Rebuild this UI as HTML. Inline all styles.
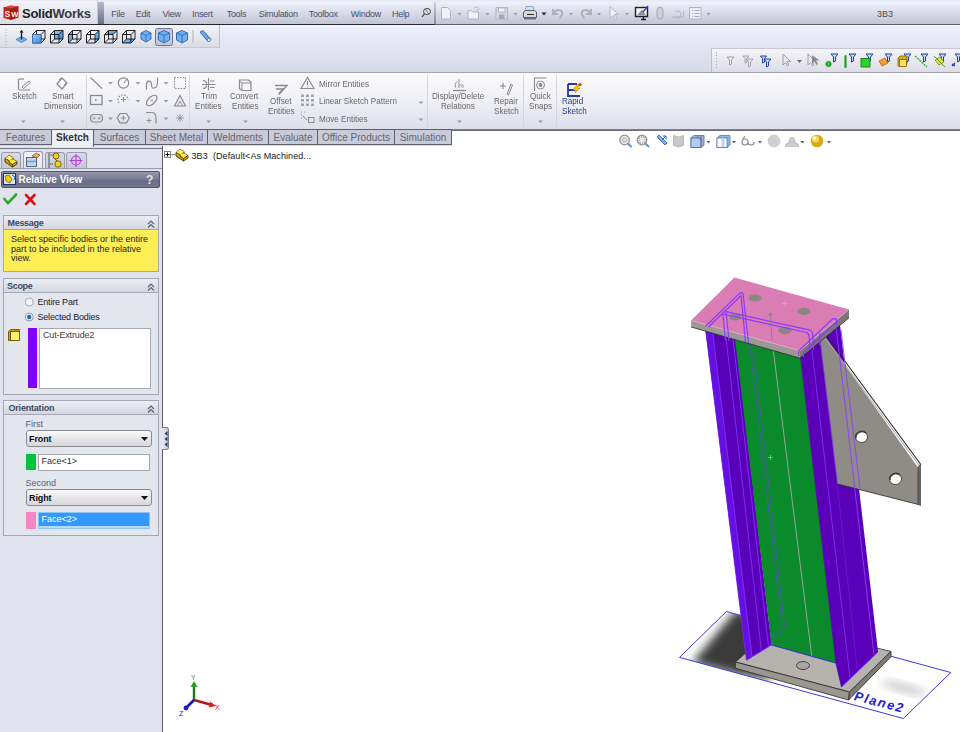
<!DOCTYPE html>
<html><head><meta charset="utf-8">
<style>
*{box-sizing:border-box}
html,body{margin:0;padding:0;width:960px;height:732px;overflow:hidden;background:#fff;font-family:"Liberation Sans",sans-serif;}
.a{position:absolute}
.t{position:absolute;white-space:nowrap;line-height:1}
#title{left:0;top:0;width:960px;height:25px;background:linear-gradient(#e6e8f0 0%,#eef0fa 10%,#dcdfea 45%,#c6c9d8 85%,#c2c5d4 100%)}
#band{left:0;top:25px;width:960px;height:48px;background:linear-gradient(#fafbff 0%,#eceef9 4%,#e4e6f2 40%,#d6d9e6 100%)}
#ribbon{left:0;top:73px;width:960px;height:57px;background:linear-gradient(#fafafc 0%,#eff0f5 50%,#dcdee8 100%)}
#panel{left:0;top:146px;width:163px;height:586px;background:#e0e3ed}
.menu{font-size:9px;color:#4c4c70;top:9.5px;letter-spacing:-0.3px}
.rt{font-size:9px;color:#686868;transform:scaleX(0.9);transform-origin:0 0}
.tab{position:absolute;top:129px;height:16px;background:#c9cbd8;border:1px solid #5d5e6c;border-left:none;font-size:10px;color:#656570;text-align:center;line-height:15.5px}
</style></head><body>
<!-- title / menu bar -->
<div id="title" class="a"></div>
<div class="a" style="left:0;top:24px;width:435px;height:1px;background:#22242c"></div>
<div class="a" style="left:435px;top:24px;width:525px;height:1px;background:#60626e"></div>
<!-- logo -->
<div class="a" style="left:98px;top:2px;width:6px;height:22px;background:linear-gradient(#b8b8cc,#6c6c88)"></div>
<div class="t menu" style="left:111.3px">File</div>
<div class="t menu" style="left:135.8px">Edit</div>
<div class="t menu" style="left:162.5px">View</div>
<div class="t menu" style="left:192px">Insert</div>
<div class="t menu" style="left:226.7px">Tools</div>
<div class="t menu" style="left:258.7px">Simulation</div>
<div class="t menu" style="left:308.7px">Toolbox</div>
<div class="t menu" style="left:350.8px">Window</div>
<div class="t menu" style="left:392px">Help</div>
<div class="t" style="left:877px;top:9.5px;font-size:9px;color:#4a4a58">3B3</div>

<!-- toolbar band -->
<div id="band" class="a"></div>
<div class="a" style="left:0;top:72px;width:960px;height:1px;background:#a4a4ae"></div>
<div class="a" style="left:0;top:25px;width:220px;height:23px;background:linear-gradient(#f4f4f8,#dcdce6);border-right:1px solid #c0c0cc;border-bottom:1px solid #c8c8d2"></div>
<div class="a" style="left:711px;top:48px;width:249px;height:24px;background:linear-gradient(#f4f4f8,#dcdce6);border-left:1px solid #c0c0cc;border-top:1px solid #c8c8d2"></div>

<!-- title toolbar icons -->
<div class="a" style="left:0;top:1px;width:98px;height:23px;background:linear-gradient(#f2f2f7,#dcdce6);border-right:1px solid #c8c8d4"></div>
<div class="a" style="left:434px;top:2px;width:2px;height:22px;background:linear-gradient(#d0d0dc,#8a8a9a)"></div>
<svg class="a" style="left:0;top:0" width="960" height="25" viewBox="0 0 960 25">
<!-- logo cube -->
<path d="M3.5 7.5L10.5 5.3 18.5 6.5 11 8.7z" fill="#e8483c"/>
<path d="M3.5 7.5L11 8.7 11 20 3.5 18z" fill="#c8221a"/>
<path d="M11 8.7L18.5 6.5 18.5 17.5 11 20z" fill="#b01810"/>
<path d="M3.5 7.5L11 8.7 18.5 6.5M11 8.7V20" fill="none" stroke="#801008" stroke-width="0.6"/>
<text x="4.6" y="17.2" font-family="Liberation Sans" font-weight="bold" font-size="8.5" fill="#ffe8e4">S</text>
<text x="11.3" y="16.8" font-family="Liberation Sans" font-weight="bold" font-size="7.5" fill="#fff4f0">W</text>
<!-- pin -->
<path d="M422 17l3-4" stroke="#404040" stroke-width="1.2"/><ellipse cx="427" cy="11.5" rx="3.5" ry="3" fill="#e8e8ec" stroke="#404040" stroke-width="1"/><path d="M425 9l4 5" stroke="#606060" stroke-width="0.8"/>
<g fill="#f2f2f6" stroke="#b4b4bc" stroke-width="1">
<!-- new -->
<path d="M441.5 7.5h6l3 3v8.5h-9z"/>
<!-- open -->
<path d="M468 10.5h3l1.5 1.5h6v7h-10.5z"/><path d="M474 8l3-1.5 2 2-2 2" fill="none"/>
<!-- save -->
<path d="M496 7.5h11.5v11.5h-11.5z" fill="#d8d8dc"/>
<rect x="498.5" y="8" width="6.5" height="4" fill="#f4f4f6"/><rect x="499" y="14.5" width="5.5" height="4.5" fill="#a8a8b0" stroke="none"/>
<!-- undo -->
<path d="M553 9v5h5M553.5 13.5q3-5 7-3t-1 8" fill="none" stroke="#b0b0b8" stroke-width="2"/>
<!-- redo -->
<path d="M591 9v5h-5M590.5 13.5q-3-5-7-3t1 8" fill="none" stroke="#b0b0b8" stroke-width="2"/>
<!-- select -->
<path d="M610 6.5v12l3-3 2.5 4 1.5-1-2.5-4h4z"/>
<!-- paperclip -->
<rect x="657" y="7" width="6" height="12" rx="3" fill="#d0d0d4" stroke="#a8a8b0"/>
<!-- tape -->
<path d="M672 17h4M675 12a3.5 3.5 0 1 1 0.1 5h8.5v-6.5" fill="none"/>
<!-- options -->
<rect x="689.5" y="7.5" width="11.5" height="11.5" fill="#eeeef2"/>
<path d="M692 10.5h1M694.5 10.5h5M692 13.5h1M694.5 13.5h5M692 16.5h1M694.5 16.5h5" stroke="#a8a8b0"/>
</g>
<!-- print -->
<path d="M526 6.5h7l1 5h-9z" fill="#c8e0fa" stroke="#7a9ac8" stroke-width="0.8"/>
<path d="M523.5 12l2-1.5h9l2 1.5v5.5h-13z" fill="#d8d8da" stroke="#505050" stroke-width="0.9"/>
<path d="M524 17.5h12v2h-12z" fill="#707070"/>
<path d="M527 14.5h7" stroke="#303030" stroke-width="1"/>
<!-- rebuild monitor -->
<rect x="635.5" y="7.5" width="12" height="9" fill="#f0f0f4" stroke="#202020" stroke-width="1.4"/>
<path d="M637 15.5l5-6 4 6z" fill="#909098"/><path d="M641 19.5h5M643.5 16.5v3" stroke="#202020" stroke-width="1.3"/>
<path d="M643 12l5-6" stroke="#3040c0" stroke-width="1.3"/>
<!-- arrows -->
<g fill="#9a9aa4">
<path d="M457.5 13h4l-2 2.5z"/><path d="M485.5 13h4l-2 2.5z"/><path d="M513.5 13h4l-2 2.5z"/><path d="M569 13h4l-2 2.5z"/><path d="M597 13h4l-2 2.5z"/><path d="M625 13h4l-2 2.5z"/><path d="M706.5 13h4l-2 2.5z"/>
</g>
<path d="M541.5 12.5h5l-2.5 3z" fill="#202040"/>
</svg>
<div class="t" style="left:22px;top:7px;font-size:13px;font-weight:bold;color:#222226;letter-spacing:-0.25px">Solid<span style="color:#3a3a44">Works</span></div>
<!-- view toolbar icons -->
<svg class="a" style="left:0;top:25px" width="220" height="23" viewBox="0 25 220 23">
<g fill="#a8a8b4"><rect x="5.5" y="29" width="1" height="1"/><rect x="5.5" y="32" width="1" height="1"/><rect x="5.5" y="35" width="1" height="1"/><rect x="5.5" y="38" width="1" height="1"/><rect x="5.5" y="41" width="1" height="1"/><rect x="5.5" y="44" width="1" height="1"/></g>
<!-- normal to -->
<path d="M16 39.5l5.5-3 5.5 3-5.5 3z" fill="#7ab4ec" stroke="#3a78c0" stroke-width="0.8"/>
<path d="M21.5 39.5v-9" stroke="#101020" stroke-width="1.2"/><path d="M19.5 32.5l2-2.5 2 2.5z" fill="#101020"/>
<!-- cubes -->
<defs><linearGradient id="cubeblue" x1="0" y1="0" x2="1" y2="1"><stop offset="0" stop-color="#9ccaf4"/><stop offset="1" stop-color="#3a88d8"/></linearGradient></defs>
<path d="M32.5 34.5 L41.0 34.5 L41.0 43.0 L32.5 43.0zM36.5 30.5 L45.0 30.5 L45.0 39.0 L36.5 39.0zM32.5 34.5L36.5 30.5M41.0 34.5L45.0 30.5M41.0 43.0L45.0 39.0M32.5 43.0L36.5 39.0" fill="none" stroke="#101010" stroke-width="0.9"/><path d="M32.5 34.5 L41.0 34.5 L41.0 43.0 L32.5 43.0z" fill="url(#cubeblue)" stroke="#3a70b8" stroke-width="0.8"/>
<path d="M54.5 30.5 L63.0 30.5 L63.0 39.0 L54.5 39.0z" fill="url(#cubeblue)"/><path d="M50.5 34.5 L59.0 34.5 L59.0 43.0 L50.5 43.0zM54.5 30.5 L63.0 30.5 L63.0 39.0 L54.5 39.0zM50.5 34.5L54.5 30.5M59.0 34.5L63.0 30.5M59.0 43.0L63.0 39.0M50.5 43.0L54.5 39.0" fill="none" stroke="#101010" stroke-width="0.9"/>
<path d="M68.5 34.5 L72.5 30.5 L72.5 39.0 L68.5 43.0z" fill="url(#cubeblue)"/><path d="M68.5 34.5 L77.0 34.5 L77.0 43.0 L68.5 43.0zM72.5 30.5 L81.0 30.5 L81.0 39.0 L72.5 39.0zM68.5 34.5L72.5 30.5M77.0 34.5L81.0 30.5M77.0 43.0L81.0 39.0M68.5 43.0L72.5 39.0" fill="none" stroke="#101010" stroke-width="0.9"/>
<path d="M95.0 34.5 L99.0 30.5 L99.0 39.0 L95.0 43.0z" fill="url(#cubeblue)"/><path d="M86.5 34.5 L95.0 34.5 L95.0 43.0 L86.5 43.0zM90.5 30.5 L99.0 30.5 L99.0 39.0 L90.5 39.0zM86.5 34.5L90.5 30.5M95.0 34.5L99.0 30.5M95.0 43.0L99.0 39.0M86.5 43.0L90.5 39.0" fill="none" stroke="#101010" stroke-width="0.9"/>
<path d="M104.5 34.5 L108.5 30.5 L117.0 30.5 L113.0 34.5z" fill="url(#cubeblue)"/><path d="M104.5 34.5 L113.0 34.5 L113.0 43.0 L104.5 43.0zM108.5 30.5 L117.0 30.5 L117.0 39.0 L108.5 39.0zM104.5 34.5L108.5 30.5M113.0 34.5L117.0 30.5M113.0 43.0L117.0 39.0M104.5 43.0L108.5 39.0" fill="none" stroke="#101010" stroke-width="0.9"/>
<path d="M122.5 43.0 L126.5 39.0 L135.0 39.0 L131.0 43.0z" fill="url(#cubeblue)"/><path d="M122.5 34.5 L131.0 34.5 L131.0 43.0 L122.5 43.0zM126.5 30.5 L135.0 30.5 L135.0 39.0 L126.5 39.0zM122.5 34.5L126.5 30.5M131.0 34.5L135.0 30.5M131.0 43.0L135.0 39.0M122.5 43.0L126.5 39.0" fill="none" stroke="#101010" stroke-width="0.9"/>
<!-- iso cubes -->
<path d="M146 30.5l5 2.5v6l-5 3-5-3v-6z" fill="#6eb0f0" stroke="#2a62b0" stroke-width="0.9"/><path d="M141 33l5 2.5 5-2.5M146 35.5v6" fill="none" stroke="#2a62b0" stroke-width="0.8"/>
<rect x="155.5" y="28.5" width="17" height="17" rx="2" fill="#c4c8dc" stroke="#70748c" stroke-width="1"/>
<path d="M164 30.5l5.5 2.5v7l-5.5 3-5.5-3v-7z" fill="#6eb0f0" stroke="#2a62b0" stroke-width="0.9"/><path d="M158.5 33l5.5 2.5 5.5-2.5M164 35.5v7" fill="none" stroke="#2a62b0" stroke-width="0.8"/>
<path d="M182 30.5l5.5 2.5v7l-5.5 3-5.5-3v-7z" fill="#6eb0f0" stroke="#2a62b0" stroke-width="0.9"/><path d="M176.5 33l5.5 2.5 5.5-2.5M182 35.5v7" fill="none" stroke="#2a62b0" stroke-width="0.8"/>
<rect x="192.5" y="30" width="1" height="13" fill="#b0b0bc"/>
<!-- wand -->
<path d="M200 32l3-1.5 8 9-2.5 2.5z" fill="#6aa8e8" stroke="#2a62b0" stroke-width="0.9"/><circle cx="209" cy="40" r="1.6" fill="#fff" stroke="#2a62b0" stroke-width="0.6"/>
</svg>
<!-- selection filter toolbar icons -->
<svg class="a" style="left:711px;top:48px" width="249" height="24" viewBox="711 48 249 24">
<g fill="#a8a8b4"><rect x="716" y="52" width="1" height="1"/><rect x="716" y="55" width="1" height="1"/><rect x="716" y="58" width="1" height="1"/><rect x="716" y="61" width="1" height="1"/><rect x="716" y="64" width="1" height="1"/><rect x="716" y="67" width="1" height="1"/></g>
<g fill="#e8e8ee" stroke="#9a9aa4" stroke-width="0.9">
<path d="M727 57h7l-2.5 3v4l-2 1v-5z"/>
<path d="M743 56h6l-2 2.5v3.5l-2 1v-4.5zM746 59h7l-2.5 3v4l-2 1v-5z"/>
<path d="M783 54v11l2.5-2.5 2 3.5 1.5-1-2-3.5h3.5z"/>
<path d="M808 54v11l2.5-2.5 2 3.5 1.5-1-2-3.5h3.5z"/>
</g>
<path d="M812 55v9l2.5-2.5 2 3.5 1.5-1-2-3.5h3.5z" fill="#8a8a94"/>
<path d="M797 60h5l-2.5 3z" fill="#6a6a74"/>
<g fill="#c8dcf8" stroke="#2040a0" stroke-width="1">
<path d="M760.5 56h6l-2 2.5v3.5l-2 1v-4.5zM764 59h7l-2.5 3v4l-2 1v-5z"/>
<path d="M831 54h7l-2.5 3v4l-2 1v-5z"/>
<path d="M849 54h7l-2.5 3v4l-2 1v-5z"/>
<path d="M866 54h7l-2.5 3v4l-2 1v-5z"/>
<path d="M885 54h7l-2.5 3v4l-2 1v-5z"/>
<path d="M904 54h7l-2.5 3v4l-2 1v-5z"/>
<path d="M921 54h7l-2.5 3v4l-2 1v-5z"/>
<path d="M939 54h7l-2.5 3v4l-2 1v-5z"/>
<path d="M955 54h7l-2.5 3v4l-2 1v-5z"/>
</g>
<circle cx="828.5" cy="64" r="2.6" fill="#30c030" stroke="#108010" stroke-width="0.8"/>
<path d="M845.5 56v11" stroke="#20a020" stroke-width="2.2" stroke-linecap="round"/>
<rect x="861" y="58.5" width="9" height="8.5" fill="#30d030" stroke="#108010" stroke-width="0.9"/>
<path d="M879 61l6-3 3 5-6 3z" fill="#f4a030" stroke="#c06010" stroke-width="0.8"/>
<path d="M898 58l2-2h7v8l-2 2h-7z" fill="#d4b020" stroke="#806000" stroke-width="0.8"/><rect x="899.5" y="59.5" width="7" height="7" fill="#f8e060" stroke="#806000" stroke-width="0.8"/>
<path d="M915 56l12 11" stroke="#30a030" stroke-width="1.3" stroke-dasharray="2 1"/>
<path d="M935 60l5-3 4 5-5 3z" fill="#f0e040" stroke="#908010" stroke-width="0.8"/><path d="M934 56l11 11" stroke="#30a030" stroke-width="1"/>
<path d="M952 64l3 2M955 63l-3 3" stroke="#2040c0" stroke-width="1.5"/>
</svg>
<!-- ribbon -->
<div id="ribbon" class="a"></div>
<svg class="a" style="left:0;top:72px" width="600" height="58" viewBox="0 72 600 58">
<g fill="none" stroke="#8a8a8a" stroke-width="1.2">
<!-- sketch icon -->
<path d="M18.5 79v9.5q0 1.5 1.5 1.5h10"/><path d="M19 79h5" /><path d="M22 87l7-6 1.5 1.5-7 6z" stroke-width="1"/>
<!-- smart dimension -->
<path d="M57 84l5-6 5 5-5 6z"/><path d="M59 80l2-2M64 85l2-2" stroke-width="1"/>
<!-- line -->
<path d="M90.5 77.5l11.5 11"/>
<!-- circle -->
<circle cx="123.5" cy="83" r="5.2"/><path d="M124 83l3.5-4.5" stroke-width="1"/>
<!-- spline -->
<path d="M146.5 89.5V85C146.5 80 151.5 80 151.5 84.5S153 88.5 155.5 87.5 157.5 82 157.5 77.5"/>
<!-- rectangle -->
<rect x="90.5" y="95.5" width="11.5" height="9" stroke-width="1.3"/><rect x="95" y="99" width="1.6" height="1.6" fill="#8a8a8a" stroke="none"/>
<!-- arc dashed -->
<path d="M119 103a5 5 0 1 1 9 -3" stroke-dasharray="1.5 1.5"/><path d="M123.5 97v5M121 99.5h5" stroke-width="1"/>
<!-- ellipse -->
<ellipse cx="151.7" cy="100.5" rx="6.5" ry="3.5" transform="rotate(-45 151.7 100.5)"/><path d="M150.5 99.3l2.4 2.4M152.9 99.3l-2.4 2.4" stroke-width="0.7"/>
<!-- slot -->
<rect x="90.5" y="114.5" width="12" height="7.5" rx="3.5"/><circle cx="94" cy="118.2" r="1" stroke-width="0.8"/><circle cx="99" cy="118.2" r="1" stroke-width="0.8"/>
<!-- polygon -->
<path d="M120 113.5h6.5l2.8 4.5-2.8 4.8h-6.5l-2.8-4.8z"/><path d="M123.3 115.5v5M120.8 118h5" stroke-width="1"/>
<!-- fillet -->
<path d="M146 112.5h5q5 0 5 5v6"/><path d="M149 118v5M146.5 120.5h5" stroke-width="0.9"/>
<!-- dashed box -->
<path d="M174.5 77.5h11v11h-11z" stroke-dasharray="1.5 1.3" stroke-width="1"/>
<!-- text A -->
<path d="M174.5 106l5.5-10.5 5.5 10.5z"/><path d="M177.5 106l2.5-5 2.5 5" stroke-width="0.9"/>
<!-- point star -->
<path d="M180 114v8M176 118h8M177.2 115.2l5.6 5.6M182.8 115.2l-5.6 5.6" stroke-width="0.8"/>
<!-- trim -->
<path d="M208.5 78v12.5M202 84.5h13.5M210 81h4.5M210 87.5h4.5M203 80.5q3 0 4 3M203 88.5q3 0 4-3" stroke-width="1.1"/>
<!-- convert -->
<path d="M239.5 81v7.5l2.5 2h9v-8l-2.5-2.5h-9z"/><path d="M242 91v-8h9M239.5 81l2.5 2" stroke-width="1"/>
<!-- offset -->
<path d="M275 85.5h12l-8 9" stroke-width="1.3"/><path d="M276 89h7l-4.5 5" stroke-width="1.3"/>
<!-- mirror -->
<path d="M307.5 77.5l-6.5 11h13z" stroke-width="1.2"/><path d="M307.5 81v4M307.5 86.5v1" stroke-width="1.2"/>
<!-- repair -->
<path d="M500 86h6M503 83v6" stroke-width="1.1"/><path d="M507 94l4-10 1.5 1-4 10z" stroke-width="1"/>
<!-- quick snaps -->
<path d="M534.5 91v-13h12" stroke-width="1.1"/><circle cx="540.5" cy="85" r="4" stroke-width="1"/><circle cx="540.5" cy="85" r="1.3" fill="#8a8a8a"/>
<!-- display/delete relations -->
<path d="M453 90.5h13" stroke-width="1.3"/><path d="M455.5 87.5q-1.5-4 1.5-6M459 88v-9M459.5 84l3 3.5M462 84l2 3" stroke-width="0.9"/>
</g>
<!-- linear pattern dots -->
<g fill="#a4a4a4">
<rect x="301" y="94.5" width="3" height="2.5"/><rect x="306" y="94.5" width="3" height="2.5"/><rect x="311" y="94.5" width="3" height="2.5"/>
<rect x="301" y="99" width="3" height="2.5"/><rect x="306" y="99" width="3" height="2.5"/><rect x="311" y="99" width="3" height="2.5"/>
<rect x="301" y="103.5" width="3" height="2.5"/><rect x="306" y="103.5" width="3" height="2.5"/><rect x="311" y="103.5" width="3" height="2.5"/>
</g>
<g fill="none" stroke="#8c8c8c" stroke-width="1">
<path d="M301 112h1M304 112h1M301 115h1M301 118h1M304 115v0" stroke-dasharray="1 1.5"/>
<path d="M303 116l4 4" /><rect x="308.5" y="117.5" width="5.5" height="5"/>
</g>
<!-- dropdown arrows -->
<g fill="#9a9aa2">
<path d="M21 120.5h5l-2.5 2.5z"/><path d="M60 120.5h5l-2.5 2.5z"/>
<path d="M108 82h5l-2.5 2.5z"/><path d="M135.5 82h5l-2.5 2.5z"/><path d="M163.5 82h5l-2.5 2.5z"/>
<path d="M108 100h5l-2.5 2.5z"/><path d="M135.5 100h5l-2.5 2.5z"/><path d="M163.5 100h5l-2.5 2.5z"/>
<path d="M108 117.5h5l-2.5 2.5z"/><path d="M163.5 117.5h5l-2.5 2.5z"/>
<path d="M206 120.5h5l-2.5 2.5z"/><path d="M243 120.5h5l-2.5 2.5z"/>
<path d="M418.5 101.5h5l-2.5 2.5z"/><path d="M418.5 118.5h5l-2.5 2.5z"/>
<path d="M457 120.5h5l-2.5 2.5z"/><path d="M538 120.5h5l-2.5 2.5z"/>
</g>
<!-- separators -->
<g fill="#d4d5de">
<rect x="86" y="75" width="1" height="52"/><rect x="189" y="75" width="1" height="52"/><rect x="427" y="75" width="1" height="52"/><rect x="523" y="75" width="1" height="52"/><rect x="556" y="75" width="1" height="52"/>
</g>
<!-- rapid sketch icon -->
<path d="M568 84h9M568 84v12h12M568 90h7" fill="none" stroke="#2a3a9a" stroke-width="1.8"/>
<path d="M574 88l4-4 2 1-3 3h3l-5 5 1-3h-3z" fill="#f5c400" stroke="#b08000" stroke-width="0.5"/>
<circle cx="580" cy="84.5" r="1.6" fill="#e03020"/>
</svg>

<div class="t rt" style="left:11.5px;top:92.0px">Sketch</div>
<div class="t rt" style="left:52px;top:92.0px">Smart</div>
<div class="t rt" style="left:43.75px;top:102.0px">Dimension</div>
<div class="t rt" style="left:201px;top:92.0px">Trim</div>
<div class="t rt" style="left:195px;top:102.0px">Entities</div>
<div class="t rt" style="left:230px;top:92.0px">Convert</div>
<div class="t rt" style="left:231.5px;top:102.0px">Entities</div>
<div class="t rt" style="left:270px;top:97.0px">Offset</div>
<div class="t rt" style="left:268px;top:107.0px">Entities</div>
<div class="t rt" style="left:318.8px;top:79.7px">Mirror Entities</div>
<div class="t rt" style="left:318.75px;top:97.2px">Linear Sketch Pattern</div>
<div class="t rt" style="left:318.8px;top:114.8px">Move Entities</div>
<div class="t rt" style="left:432.4px;top:92.0px">Display/Delete</div>
<div class="t rt" style="left:441px;top:102.0px">Relations</div>
<div class="t rt" style="left:494px;top:97.0px">Repair</div>
<div class="t rt" style="left:494px;top:107.0px">Sketch</div>
<div class="t rt" style="left:530px;top:92.0px">Quick</div>
<div class="t rt" style="left:529px;top:102.0px">Snaps</div>
<div class="t rt" style="left:562px;top:97.0px;color:#2c3c8c">Rapid</div>
<div class="t rt" style="left:562px;top:107.0px;color:#2c3c8c">Sketch</div>
<!-- panel -->
<div id="panel" class="a"></div>
<div class="a" style="left:162px;top:146px;width:1px;height:586px;background:#555866"></div>
<div class="a" style="left:0;top:148px;width:162px;height:1px;background:#767886"></div>

<!-- panel contents -->
<!-- icon tabs -->
<div class="a" style="left:1px;top:152px;width:20px;height:17px;background:linear-gradient(#d8dae6,#c4c6d4);border:1px solid #9a9cac;border-bottom:none;border-radius:3px 3px 0 0"></div>
<div class="a" style="left:23px;top:151px;width:20px;height:18px;background:linear-gradient(#f4f5f8,#e4e5ec);border:1px solid #9a9cac;border-bottom:none;border-radius:3px 3px 0 0"></div>
<div class="a" style="left:45px;top:152px;width:20px;height:17px;background:linear-gradient(#d8dae6,#c4c6d4);border:1px solid #9a9cac;border-bottom:none;border-radius:3px 3px 0 0"></div>
<div class="a" style="left:66px;top:152px;width:21px;height:17px;background:linear-gradient(#d8dae6,#c4c6d4);border:1px solid #9a9cac;border-bottom:none;border-radius:3px 3px 0 0"></div>
<div class="a" style="left:0;top:168px;width:162px;height:1px;background:#9a9cac"></div>
<svg class="a" style="left:0;top:150px" width="100" height="22" viewBox="0 150 100 22">
<!-- feature manager icon (yellow part) -->
<g transform="translate(4 153)">
<path d="M1 5.5L5 2.5 9 4.5 9 6.5 13 8.5 13 11 8.5 14 1 9z" fill="#d8a800" stroke="#3a2c00" stroke-width="0.9"/>
<path d="M1 5.5L5 2.5 9 4.5 5 7.5z" fill="#fff27a"/>
<path d="M5 7.5L9 6.5 13 8.5 8.5 11.5z" fill="#ffe840"/>
<path d="M1 5.5L5 7.5 5 9.5 8.5 11.5 8.5 14M8.5 11.5L13 8.5" fill="none" stroke="#3a2c00" stroke-width="0.8"/>
</g>
<!-- property manager -->
<rect x="26.5" y="157.5" width="10" height="9" fill="#bcd8f0" stroke="#4a5a70" stroke-width="0.9"/>
<path d="M27 161.5h9" stroke="#6aa0d0" stroke-width="1.5"/>
<path d="M32 156l4-3 4 2-3 3z" fill="#e8b060" stroke="#7a5020" stroke-width="0.7"/>
<!-- config manager -->
<path d="M49 153v15" stroke="#505060" stroke-width="1"/><path d="M50 155h3M50 164h3" stroke="#505060" stroke-width="0.8"/>
<circle cx="56" cy="156" r="3" fill="#f0d020" stroke="#5a4800" stroke-width="0.8"/>
<circle cx="58" cy="164" r="3.2" fill="#f0d020" stroke="#5a4800" stroke-width="0.8"/>
<path d="M55 159l2 2" stroke="#5a4800" stroke-width="0.8"/>
<!-- dimxpert -->
<circle cx="76" cy="160.5" r="4.5" fill="none" stroke="#b040e0" stroke-width="1.2"/>
<path d="M76 154v13M69.5 160.5h13" stroke="#b040e0" stroke-width="1.2"/>
</svg>
<!-- property manager header -->
<div class="a" style="left:1px;top:171px;width:159px;height:17px;background:linear-gradient(#9597ae 0%,#7a7c96 45%,#6a6c86 60%,#75778f 100%);border:1px solid #55576c;border-radius:2px"></div>
<svg class="a" style="left:2px;top:172px" width="16" height="15" viewBox="0 0 16 15">
<rect x="1.5" y="1.5" width="12" height="11" fill="#d8e4f4" stroke="#203060" stroke-width="1"/>
<path d="M3 4l4-1 3 4-2 4-4-2z" fill="#f0d000" stroke="#604800" stroke-width="0.6"/>
<path d="M10 3l3 2-1 3" fill="none" stroke="#3070d0" stroke-width="1"/>
</svg>
<div class="t" style="left:18.5px;top:175px;font-size:10px;font-weight:bold;color:#fff">Relative View</div>
<div class="t" style="left:146px;top:173.5px;font-size:12px;font-weight:bold;color:#e4e4ec">?</div>
<!-- check / x -->
<svg class="a" style="left:0;top:190px" width="40" height="18" viewBox="0 190 40 18">
<path d="M4.5 199l3.5 4 8-8.5" fill="none" stroke="#2a9a2a" stroke-width="2.6" stroke-linecap="round"/>
<path d="M5.5 199l2.5 2.5 7-7.5" fill="none" stroke="#6ad86a" stroke-width="1"/>
<path d="M26 195l8.5 9M34.5 195l-8.5 9" fill="none" stroke="#d01818" stroke-width="2.6" stroke-linecap="round"/>
</svg>
<!-- Message group -->
<div class="a" style="left:3px;top:215px;width:156px;height:57px;border:1px solid #a4a6b4;background:#fdee55"></div>
<div class="a" style="left:4px;top:216px;width:154px;height:14px;background:linear-gradient(#eceef4,#d4d6e0);border-bottom:1px solid #a4a6b4"></div>
<div class="t" style="left:7.5px;top:219px;font-size:9px;font-weight:bold;color:#3e4862;letter-spacing:-0.3px">Message</div>
<svg class="a" style="left:146px;top:219px" width="10" height="10" viewBox="0 0 10 10"><path d="M2 5l3-3 3 3M2 8.5l3-3 3 3" fill="none" stroke="#5a6070" stroke-width="1.15"/></svg>
<div class="t" style="left:11px;top:235px;font-size:9px;color:#1e1e1e;line-height:9.5px">Select specific bodies or the entire<br>part to be included in the relative<br>view.</div>
<!-- Scope group -->
<div class="a" style="left:3px;top:278px;width:156px;height:117px;border:1px solid #a4a6b4;background:#e4e6ee"></div>
<div class="a" style="left:4px;top:279px;width:154px;height:14px;background:linear-gradient(#eceef4,#d4d6e0);border-bottom:1px solid #a4a6b4"></div>
<div class="t" style="left:7px;top:282px;font-size:9px;font-weight:bold;color:#3e4862;letter-spacing:-0.3px">Scope</div>
<svg class="a" style="left:146px;top:282px" width="10" height="10" viewBox="0 0 10 10"><path d="M2 5l3-3 3 3M2 8.5l3-3 3 3" fill="none" stroke="#5a6070" stroke-width="1.15"/></svg>
<svg class="a" style="left:24px;top:296px" width="12" height="28" viewBox="0 0 12 28">
<circle cx="5.2" cy="6" r="4" fill="#f4f4f6" stroke="#a0a0a8" stroke-width="0.9"/>
<circle cx="5.2" cy="21" r="4" fill="#f4f4f6" stroke="#8090a8" stroke-width="0.9"/>
<circle cx="5.2" cy="21" r="2.2" fill="#1f6cb0"/>
</svg>
<div class="t" style="left:37.5px;top:297.5px;font-size:9px;color:#202030;letter-spacing:-0.2px">Entire Part</div>
<div class="t" style="left:37.5px;top:312.5px;font-size:9px;color:#202030;letter-spacing:-0.2px">Selected Bodies</div>
<svg class="a" style="left:6px;top:327px" width="16" height="16" viewBox="0 0 16 16">
<path d="M2.5 4.5l2-2h9v9l-2 2h-9z" fill="#c8a000" stroke="#6a5200" stroke-width="0.9"/>
<rect x="4.5" y="4.5" width="9" height="9" fill="#fff270" stroke="#6a5200" stroke-width="0.9"/>
</svg>
<div class="a" style="left:27.5px;top:328px;width:9.5px;height:60px;background:#7f00ff"></div>
<div class="a" style="left:39px;top:328px;width:112px;height:61px;background:#fff;border:1px solid #a8a8b0"></div>
<div class="t" style="left:43px;top:331px;font-size:9px;color:#404048;letter-spacing:-0.15px">Cut-Extrude2</div>
<!-- Orientation group -->
<div class="a" style="left:3px;top:400px;width:156px;height:136px;border:1px solid #a4a6b4;background:#e4e6ee"></div>
<div class="a" style="left:4px;top:401px;width:154px;height:14px;background:linear-gradient(#eceef4,#d4d6e0);border-bottom:1px solid #a4a6b4"></div>
<div class="t" style="left:8.5px;top:404px;font-size:9px;font-weight:bold;color:#3e4862;letter-spacing:-0.2px">Orientation</div>
<svg class="a" style="left:146px;top:404px" width="10" height="10" viewBox="0 0 10 10"><path d="M2 5l3-3 3 3M2 8.5l3-3 3 3" fill="none" stroke="#5a6070" stroke-width="1.15"/></svg>
<div class="t" style="left:25.5px;top:419.5px;font-size:9px;color:#5a5c72">First</div>
<div class="a" style="left:25.5px;top:430px;width:126px;height:16.5px;background:linear-gradient(#fafafa,#e6e6ea 50%,#d6d6dc);border:1px solid #8a8a92;border-radius:3px"></div>
<div class="t" style="left:29px;top:434.5px;font-size:9px;color:#101010;font-weight:bold;letter-spacing:-0.1px">Front</div>
<svg class="a" style="left:140px;top:436px" width="9" height="6" viewBox="0 0 9 6"><path d="M1 1h7l-3.5 4z" fill="#101010"/></svg>
<div class="a" style="left:25.5px;top:453.5px;width:10.5px;height:16.5px;background:#00c43c"></div>
<div class="a" style="left:37.5px;top:453.5px;width:112.5px;height:17px;background:#fff;border:1px solid #a8a8b0"></div>
<div class="t" style="left:41.5px;top:456.5px;font-size:9px;color:#303038">Face&lt;1&gt;</div>
<div class="t" style="left:25.5px;top:478.5px;font-size:9px;color:#5a5c72">Second</div>
<div class="a" style="left:25.5px;top:489px;width:126px;height:16.5px;background:linear-gradient(#fafafa,#e6e6ea 50%,#d6d6dc);border:1px solid #8a8a92;border-radius:3px"></div>
<div class="t" style="left:29px;top:493.5px;font-size:9px;color:#101010;font-weight:bold;letter-spacing:-0.1px">Right</div>
<svg class="a" style="left:140px;top:495px" width="9" height="6" viewBox="0 0 9 6"><path d="M1 1h7l-3.5 4z" fill="#101010"/></svg>
<div class="a" style="left:25.5px;top:512px;width:10.5px;height:16.5px;background:#f487c4"></div>
<div class="a" style="left:37.5px;top:512px;width:112.5px;height:17px;background:#3399ff;border:1px solid #8cc4f4;box-shadow:inset 0 -2px 0 #b8dcf8"></div>
<div class="t" style="left:41.5px;top:515px;font-size:9px;color:#fff">Face&lt;2&gt;</div>
<!-- collapse handle -->
<div class="a" style="left:162px;top:427px;width:7px;height:23px;background:linear-gradient(90deg,#e8eaf2,#c8cad8);border:1px solid #7a7c8c;border-left:none;border-radius:0 3px 3px 0"></div>
<svg class="a" style="left:163px;top:430px" width="6" height="18" viewBox="0 0 6 18"><path d="M4.5 1l-3 2.5 3 2.5zM4.5 6.5l-3 2.5 3 2.5zM4.5 12l-3 2.5 3 2.5z" fill="#2a3a70"/></svg>
<!-- viewport -->
<svg class="a" style="left:0;top:0" width="960" height="732" viewBox="0 0 960 732">
<defs>
<filter id="blur4" x="-50%" y="-50%" width="200%" height="200%"><feGaussianBlur stdDeviation="5"/></filter>
<filter id="blur2" x="-50%" y="-50%" width="200%" height="200%"><feGaussianBlur stdDeviation="4"/></filter>
<clipPath id="planeclip"><path d="M679.5 657.4L726.4 611.5 950.8 672.5 903.4 718.5z"/></clipPath>
</defs>
<!-- shadows -->
<g clip-path="url(#planeclip)">
<path d="M736 610L770 618 770 680 735 674 692 663z" fill="#3a3a3a" filter="url(#blur4)"/>
</g>
<ellipse cx="904" cy="688" rx="24" ry="4" transform="rotate(14 904 688)" fill="#000" opacity="0.22" filter="url(#blur2)"/>
<!-- plane2 -->
<path d="M679.5 657.4L726.4 611.5 950.8 672.5 903.4 718.5z" fill="none" stroke="#3a3ae0" stroke-width="1"/>
<text x="0" y="0" transform="translate(853.5 700) rotate(14.5)" font-family="Liberation Sans" font-weight="bold" font-style="italic" font-size="13" fill="#2424d0" letter-spacing="1.6">Plane2</text>
<!-- base plate -->
<path d="M735.3 662L778 625 891 651.4 849.5 692z" fill="#b6b2ae" stroke="#2a2a2a" stroke-width="0.8"/>
<path d="M735.3 662L849.5 692 848.6 700 735.3 668.2z" fill="#9a9692" stroke="#2a2a2a" stroke-width="0.8"/>
<path d="M849.5 692L891 651.4 891 656.7 848.6 700z" fill="#7e7a76" stroke="#2a2a2a" stroke-width="0.8"/>
<ellipse cx="803" cy="665.5" rx="6.5" ry="4" fill="#a8a4a0" stroke="#2a2a2a" stroke-width="0.8"/>
<!-- left flange -->
<path d="M705.5 331L736 339.5 771.6 645 746.8 660.2z" fill="#5a00b8"/>
<path d="M706 332L746.5 660" fill="none" stroke="#7a30f0" stroke-width="1"/>
<path d="M706 332L713 334 752.5 656 746.8 660.2z" fill="#6410e0"/><path d="M713 334L752 657M726 337.5L761.5 652M733 339L768.5 647" fill="none" stroke="#8030ff" stroke-width="0.9"/>
<path d="M746.8 660.2L771.6 645" fill="none" stroke="#8a40ff" stroke-width="0.9"/>
<!-- web green -->
<path d="M735 339.5L800.6 357 836 663 771.6 645z" fill="#0a8a2a"/>
<path d="M749.6 343.4L782 625.6 771 639M753 344.5L784.8 627 773.5 641" fill="none" stroke="#4a5aa8" stroke-width="0.9"/>
<path d="M772 340L812.5 662" fill="none" stroke="#a4a8a4" stroke-width="0.9"/>
<path d="M771.6 645L836 663" stroke="#3a30d0" stroke-width="1.2"/>
<path d="M768 457.5h5M770.5 455v5" stroke="#40f070" stroke-width="0.8"/>
<!-- right flange -->
<path d="M800.6 357L840 325 878 652 841.6 687 836 663z" fill="#5a00b8"/>
<path d="M822 342L857.5 672" fill="none" stroke="#7018e0" stroke-width="0.8"/>
<path d="M800.6 357L836 663 841.6 687" fill="none" stroke="#4a10a0" stroke-width="1"/>
<path d="M812 350L850 678M841.6 687L878 652" fill="none" stroke="#8038f8" stroke-width="0.8"/>
<!-- gusset -->
<path d="M818.5 328L918 467.5 918 504.4 837.5 484z" fill="#8f8b87"/>
<path d="M818.5 328.5L919.5 466" stroke="#b4b0ac" stroke-width="1.1"/><path d="M819.8 327L920.8 464.5" stroke="#262626" stroke-width="1.1"/>
<path d="M918 467.5L920.5 464 920.5 505.5 918 504.4z" fill="#6a6662" stroke="#2a2a2a" stroke-width="0.6"/>
<path d="M837.5 484L918 504.4" stroke="#2a2a2a" stroke-width="0.8"/>
<path d="M820 340L837.5 484" stroke="#7a30e0" stroke-width="0.8"/>
<g stroke="#2a2a2a" stroke-width="0.8">
<ellipse cx="861.5" cy="437" rx="6" ry="5.5" fill="#fff"/>
<ellipse cx="895.5" cy="479" rx="6" ry="5.5" fill="#fff"/>
</g>
<path d="M856 438a6 5.5 0 0 1 10 -5" fill="none" stroke="#3a3a3a" stroke-width="1.6"/>
<path d="M890 480a6 5.5 0 0 1 10 -5" fill="none" stroke="#3a3a3a" stroke-width="1.6"/>
<g fill="none" stroke="#8a40ff" stroke-width="0.9">
<path d="M836 326L874 655M841 330L860 488"/>
</g>
<!-- top plate -->
<path d="M734.4 277.5L849 309.4 800 350.7 691.1 320.4z" fill="#da7db5"/>
<path d="M691.1 320.4L800 350.7 800 358.2 691.1 327z" fill="#9c9894"/>
<path d="M800 350.7L849 309.4 849 317.8 800 358.2z" fill="#7c7975"/>
<path d="M691.1 327L800 358.2 849 317.8" fill="none" stroke="#2a2a2a" stroke-width="0.8"/>
<path d="M691.1 320.4L800 350.7 849 309.4" fill="none" stroke="#f0b0d0" stroke-width="0.6"/>
<ellipse cx="755" cy="298" rx="6.5" ry="3.6" fill="#8a8682"/>
<ellipse cx="804" cy="311.3" rx="6.5" ry="3.6" fill="#8a8682"/>
<ellipse cx="785" cy="330.4" rx="6.5" ry="3.6" fill="#8a8682"/>
<ellipse cx="735" cy="317" rx="6" ry="3.6" fill="#8a8682"/>
<path d="M770.5 315L772 340" stroke="#8a8682" stroke-width="1"/><circle cx="770.5" cy="314.5" r="1.8" fill="#8a8682"/>
<path d="M782 303.5h6M785 300.5v6" stroke="#ff90d0" stroke-width="0.9"/>
<!-- purple transparent outline on plate -->
<g fill="none" stroke="#8c38ff" stroke-width="1.2">
<path d="M705.8 326L740.3 292.6 743 293.2 748.5 343"/>
<path d="M708.5 327L741 295.5 745.5 342"/>
<path d="M726 311.7L809 329.8Q812.5 331 812.8 335L813.5 350"/>
<path d="M722.8 314L806.5 332.5Q809 333.5 809.2 337L810 350"/>
<path d="M722.8 314L725.5 340M726 311.7L729 341"/>
<path d="M798.7 350.7L833 318.6 836.5 319 836.5 326"/>
<path d="M803.5 352.5L836.5 322"/>
<path d="M819.7 333.5V345M798.7 350.7V356M803.5 352.5V357"/>
</g>
<!-- triad -->
<path d="M194 700v-16" stroke="#1a7a1a" stroke-width="2.4"/><path d="M190.5 687l3.5-6 3.5 6z" fill="#2a9a2a"/>
<path d="M194 700l18 5" stroke="#b01818" stroke-width="2.4"/><path d="M210 701.5l6 4.5-7 1.5z" fill="#e02020"/>
<path d="M194 700l-8 8" stroke="#1818b0" stroke-width="2.6"/><circle cx="186" cy="708" r="2.4" fill="#2020c0"/>
<text x="191" y="680" font-family="Liberation Sans" font-size="7" fill="#2a9a2a">Y</text>
<text x="215" y="710" font-family="Liberation Sans" font-size="7" fill="#e02020">X</text>
<text x="179" y="716" font-family="Liberation Sans" font-size="7" fill="#2020c0">Z</text>
</svg>
<!-- heads-up view toolbar -->
<svg class="a" style="left:610px;top:130px" width="230" height="22" viewBox="610 130 230 22">
<!-- zoom to fit -->
<circle cx="624.5" cy="140" r="4.8" fill="#e8e8ec" stroke="#909098" stroke-width="1.3"/>
<circle cx="624.5" cy="140" r="2" fill="none" stroke="#a0a0a8" stroke-width="0.9"/>
<path d="M628 143.5l3.5 3.5" stroke="#5a90d8" stroke-width="2"/>
<!-- zoom area -->
<circle cx="642" cy="140" r="4.8" fill="#e8e8ec" stroke="#909098" stroke-width="1.3"/>
<rect x="639" y="137" width="6" height="6" fill="none" stroke="#707078" stroke-width="0.8" stroke-dasharray="1 1"/>
<path d="M645.5 143.5l3.5 3.5" stroke="#5a90d8" stroke-width="2"/>
<!-- previous view -->
<path d="M657 137l8 8 2-2-8-8z" fill="#7ab0e8" stroke="#2a60b0" stroke-width="0.8"/>
<path d="M662 140l4-4M663 136h3v3" fill="none" stroke="#2a60b0" stroke-width="1"/>
<!-- section view gray -->
<path d="M673.5 135.5l5 1.5 5-1.5v10l-5 1.5-5-1.5z" fill="#c8c8cc" stroke="#b0b0b4" stroke-width="0.8"/>
<!-- view orientation -->
<path d="M691 138l3-2.5h10v9.5l-3 2.5h-10z" fill="#8ab8e8" stroke="#506a90" stroke-width="0.8"/>
<rect x="691" y="138" width="10" height="9.5" fill="#a8cef4" stroke="#506a90" stroke-width="0.8"/>
<path d="M697 136l5 5M701 136v11" stroke="#e03030" stroke-width="0.7"/>
<!-- display style -->
<path d="M717 138l3-2.5h10v9.5l-3 2.5h-10z" fill="#8ab8ec" stroke="#5878a8" stroke-width="0.8"/>
<rect x="717" y="138" width="10" height="9.5" fill="#fafcff" stroke="#5878a8" stroke-width="0.8"/><path d="M723 138.5v8.5" stroke="#b8d4f0" stroke-width="3"/>
<!-- hide show -->
<path d="M742 142a3 3 0 1 0 6 0a3 3 0 1 0 -6 0M748 142a3 3 0 1 0 6 0M743 139l2-3" fill="none" stroke="#8a8a92" stroke-width="1.1"/>
<!-- appearance gray circle -->
<circle cx="774" cy="141" r="6" fill="#d0d0d4" stroke="#c0c0c4" stroke-width="0.6"/>
<!-- scene -->
<path d="M785 147v-3l3-2 2-5h4l2 5 3 2v3z" fill="#cacace"/>
<!-- gold sphere -->
<circle cx="817" cy="141" r="6.3" fill="#d8a818"/>
<circle cx="815.5" cy="139" r="3.5" fill="#f4d860"/>
<circle cx="814.5" cy="138" r="1.5" fill="#fffbe0"/>
<g fill="#60606a">
<path d="M706.5 141h4l-2 2.5z"/><path d="M732 141h4l-2 2.5z"/><path d="M758 141h4l-2 2.5z"/><path d="M800.5 141h4l-2 2.5z"/><path d="M827 141h4l-2 2.5z"/>
</g>
</svg>
<!-- feature tree root -->
<svg class="a" style="left:163px;top:146px" width="30" height="16" viewBox="163 146 30 16">
<rect x="164.5" y="151.5" width="6" height="6" fill="#fff" stroke="#808080" stroke-width="1"/>
<path d="M165.5 154.5h4M167.5 152.5v4" stroke="#000" stroke-width="1"/>
<path d="M171 154.5h4" stroke="#808080" stroke-width="1"/>
<g transform="translate(175 147)">
<path d="M1 5.5L5 2.5 9 4.5 9 6.5 13 8.5 13 11 8.5 14 1 9z" fill="#d8a800" stroke="#3a2c00" stroke-width="0.9"/>
<path d="M1 5.5L5 2.5 9 4.5 5 7.5z" fill="#fff27a"/>
<path d="M5 7.5L9 6.5 13 8.5 8.5 11.5z" fill="#ffe840"/>
<path d="M1 5.5L5 7.5 5 9.5 8.5 11.5 8.5 14M8.5 11.5L13 8.5" fill="none" stroke="#3a2c00" stroke-width="0.8"/>
</g>
</svg>
<div class="t" style="left:191.5px;top:151.8px;font-size:9px;color:#202020;letter-spacing:0.08px">3B3&nbsp; (Default&lt;As Machined...</div>
<!-- tabs -->
<div class="a" style="left:0;top:128.5px;width:960px;height:2px;background:linear-gradient(#8a8c98,#5e606c)"></div>
<div class="a" style="left:0;top:130px;width:452px;height:16px;background:#dcdde8"></div>
<div class="tab" style="left:0;width:52px">Features</div>
<div class="tab" style="left:52px;width:42px;background:#eeeff3;height:18px;border-bottom:none;color:#303038;font-weight:bold">Sketch</div>
<div class="tab" style="left:94px;width:52px">Surfaces</div>
<div class="tab" style="left:146px;width:62px">Sheet Metal</div>
<div class="tab" style="left:208px;width:61px">Weldments</div>
<div class="tab" style="left:269px;width:49px">Evaluate</div>
<div class="tab" style="left:318px;width:77px">Office Products</div>
<div class="tab" style="left:395px;width:57px">Simulation</div>
</body></html>
